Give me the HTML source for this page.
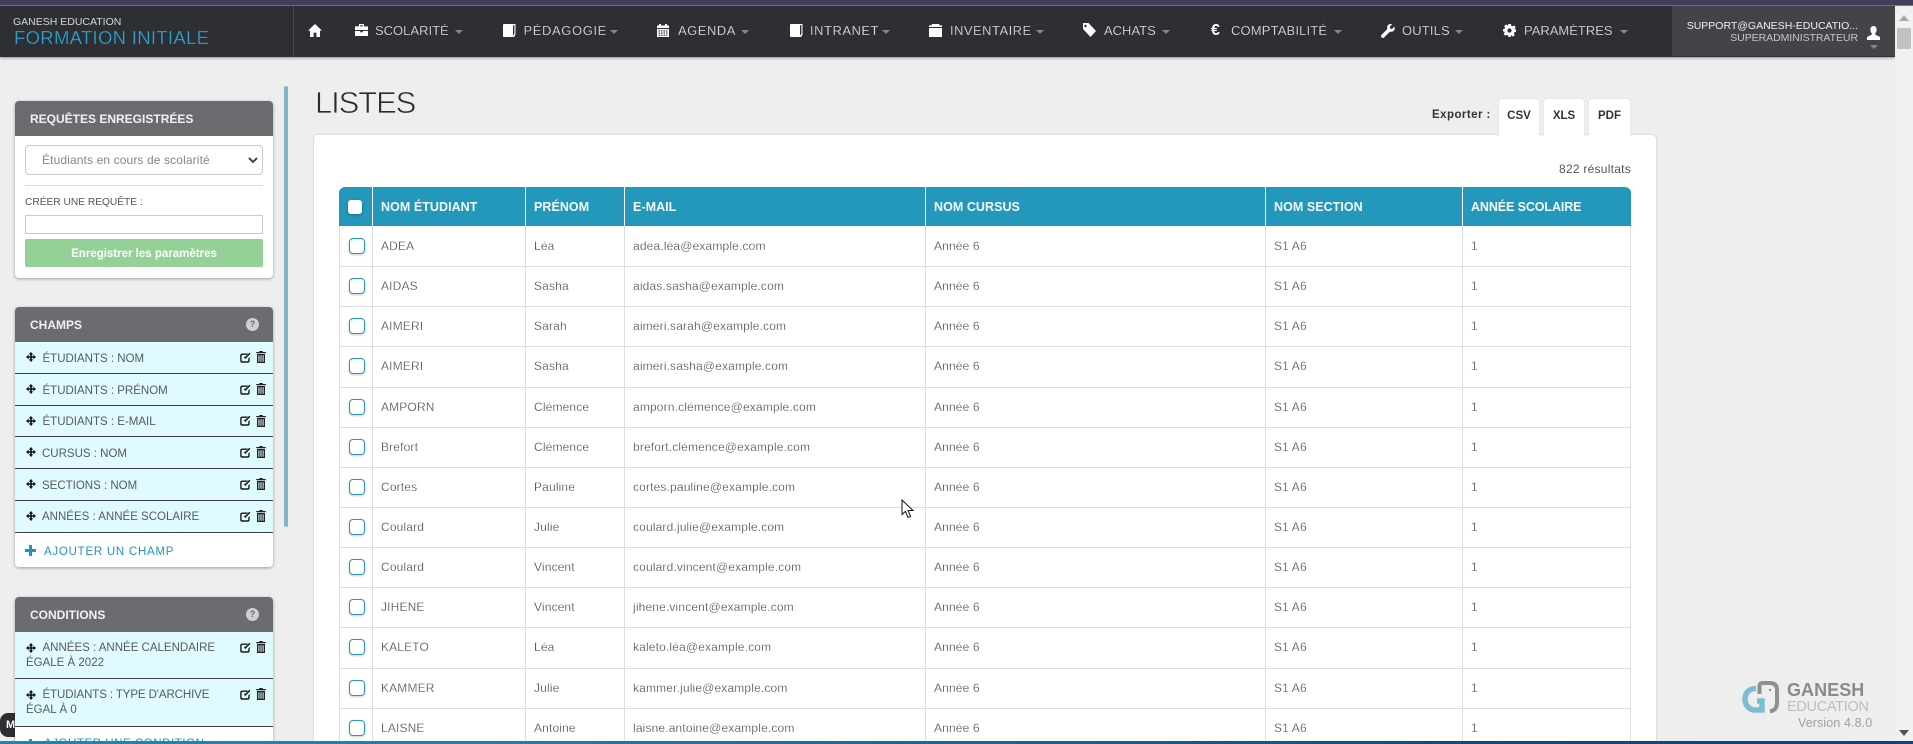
<!DOCTYPE html>
<html lang="fr"><head><meta charset="utf-8"><title>Listes</title>
<style>
*{box-sizing:border-box}
html,body{margin:0;padding:0;width:1913px;height:744px;overflow:hidden;background:#eee;font-family:"Liberation Sans",sans-serif}
body{position:relative}
.t{position:absolute;white-space:nowrap;line-height:16px;height:16px}
.a{position:absolute}
#top{left:0;top:0;width:1913px;height:6px;background:#433f5a;border-bottom:1px solid #77748a}
#nav{left:0;top:6px;width:1895px;height:51px;background:#2e2f34;box-shadow:0 1px 3px rgba(0,0,0,.4)}
#div{left:293px;top:6px;width:1px;height:51px;background:#47484d}
#user{left:1672px;top:6px;width:223px;height:50px;background:#434447}
.n{font-size:13px;color:#e4e5e6;top:22.5px;-webkit-text-stroke:.2px #2e2f34}
.c{position:absolute;top:30px;width:0;height:0;border-left:4px solid transparent;border-right:4px solid transparent;border-top:4px solid #85868a}
.ic{position:absolute;fill:#fff}
#sb{left:1895px;top:6px;width:18px;height:735px;background:#f1f1f1}
#thumb{left:1897px;top:28px;width:14px;height:21px;background:#c1c1c1}
#bot{left:0;top:741px;width:1913px;height:3px;background:linear-gradient(90deg,#1f86ad 0,#1f80a8 25%,#0f4c86 75%,#0d427c 100%)}
.p{position:absolute;left:15px;width:258px;background:#fff;border-radius:4px;box-shadow:0 1px 3px rgba(0,0,0,.35)}
.h{position:absolute;left:15px;width:258px;height:35px;background:#6b6c70;border-radius:4px 4px 0 0}
.ht{font-size:12px;font-weight:bold;color:#f1f1f1}
.r{position:absolute;left:15px;width:258px;background:#e0fbff;border-bottom:1.5px solid #3f4045}
.s{font-size:11.5px;color:#58595c}
.hp{position:absolute;left:246px;width:13px;height:13px;border-radius:50%;background:#d0d0d0;color:#6b6c70;font:bold 9px/13px "Liberation Sans",sans-serif;text-align:center}
#bar{left:284px;top:86px;width:4px;height:441px;background:#81b6c9;border-radius:2px}
#card{left:314px;top:135px;width:1342px;height:620px;background:#fff;border-radius:4px;box-shadow:0 0 2px rgba(0,0,0,.18)}
.tab{position:absolute;top:98px;height:38px;background:#fff;border:1px solid #e6e6e6;border-bottom:0;border-radius:4px 4px 0 0;font:bold 11.5px/35px "Liberation Sans",sans-serif;color:#333;text-align:center}
table{position:absolute;left:339px;top:187px;width:1292px;border-collapse:separate;border-spacing:0;table-layout:fixed;font-size:12px;letter-spacing:.15px;color:#4c4c4c}
th{height:39px;background:#2398bb;color:#f4fafc;font-size:12.5px;letter-spacing:.05px;text-align:left;padding:0 0 0 8px;border-left:1px solid #fff;font-weight:bold}
th:first-child{border-left:0;border-radius:6px 0 0 0;padding:0}
th:last-child{border-radius:0 6px 0 0;letter-spacing:-.1px}
td{height:40.15px;padding:0 0 1px 8px;border-left:1px solid #ddd;border-bottom:1px solid #ddd;-webkit-text-stroke:.2px #fff}
tbody tr:first-child td{height:41.15px}
td:first-child{padding:0 0 1px 0}
td:last-child{border-right:1px solid #ddd}
.cb{display:block;width:16px;height:16px;margin:0 0 0 9px;border:1.5px solid #2398bb;border-radius:4px;background:#fff;box-shadow:0 1px 2px rgba(0,0,0,.2)}
.cbh{display:block;width:14px;height:14px;margin:0 0 0 9px;background:#fff;border-radius:3px;box-shadow:0 1px 3px rgba(0,0,0,.3)}
</style></head><body>
<svg width="0" height="0" style="position:absolute">
<symbol id="mv" viewBox="0 0 10 10"><path d="M5 0 7.2 2.6H5.8V4.2H7.4V2.8L10 5 7.4 7.2V5.8H5.8V7.4H7.2L5 10 2.8 7.4H4.2V5.8H2.6V7.2L0 5 2.6 2.8V4.2H4.2V2.6H2.8Z" fill="#111"/></symbol>
<symbol id="ed" viewBox="0 0 11 11"><path d="M2.5 1.5H8L6.8 2.9H2.6Q1.6 2.9 1.6 3.9V8.3Q1.6 9.3 2.6 9.3H7.3Q8.3 9.3 8.3 8.3V6.4L9.7 5V8.6Q9.7 10.7 7.6 10.7H2.3Q.2 10.7.2 8.6V3.6Q.2 1.5 2.5 1.5Z" fill="#1a1a1a"/><path d="M4 5.6 5.3 7 10.5 1.8 9.3.7 5.3 4.7 4.8 4.4Z" fill="#1a1a1a"/></symbol>
<symbol id="tr" viewBox="0 0 10 12"><path d="M3.5 0H6.5L7 1H9.8V2.3H.2V1H3ZM1 3H9V12H1ZM2.4 4.2V10.8H3.4V4.2ZM4.5 4.2V10.8H5.5V4.2ZM6.6 4.2V10.8H7.6V4.2Z" fill="#222" fill-rule="evenodd"/></symbol>
</svg>
<div class="a" id="top"></div>
<div class="a" id="nav"></div>
<div class="a" id="user"></div>
<div class="a" id="div"></div>
<span class="t" style="left:13px;top:14px;font-size:10.5px;color:#d6d6d6">GANESH EDUCATION</span>
<span class="t" style="left:14px;top:27.5px;height:20px;line-height:20px;font-size:18.5px;letter-spacing:.3px;color:#2aa6ce;-webkit-text-stroke:.25px #2e2f34">FORMATION INITIALE</span>

<svg class="ic" style="left:308px;top:24px" width="14" height="13" viewBox="0 0 14 13"><path d="M7 0 14 6.6H12V13H8.4V8.6H5.6V13H2V6.6H0Z"/></svg>
<svg class="ic" style="left:355px;top:24px" width="13" height="12" viewBox="0 0 13 12"><path d="M4 0H9V2.4H13V6H0V2.4H4ZM5.2 1.2V2.4H7.8V1.2ZM0 7H5.2V8.2H7.8V7H13V12H0Z"/></svg>
<span class="t n" style="left:375px">SCOLARITÉ</span><i class="c" style="left:455px"></i>
<svg class="ic" style="left:503px;top:24px" width="13" height="13" viewBox="0 0 13 13"><path d="M1 0H12.5V10.5L11 13H1Q0 13 0 12V1Q0 0 1 0ZM10 1.2V11.6L11.4 9.8V1.2Z" fill-rule="evenodd"/></svg>
<span class="t n" style="left:523.5px;letter-spacing:.6px">PÉDAGOGIE</span><i class="c" style="left:610px"></i>
<svg class="ic" style="left:657px;top:24px" width="12" height="13" viewBox="0 0 12 13"><path d="M2 0H4V1.5H8V0H10V1.5H12V4H0V1.5H2ZM0 5H12V13H0ZM1.5 6.3V7.5H3V6.3ZM4 6.3V7.5H5.5V6.3ZM6.5 6.3V7.5H8V6.3ZM9 6.3V7.5H10.5V6.3ZM1.5 8.5V9.6H3V8.5ZM4 8.5V9.6H5.5V8.5ZM6.5 8.5V9.6H8V8.5ZM9 8.5V9.6H10.5V8.5ZM1.5 10.6V11.7H3V10.6ZM4 10.6V11.7H5.5V10.6ZM6.5 10.6V11.7H8V10.6ZM9 10.6V11.7H10.5V10.6Z" fill-rule="evenodd"/></svg>
<span class="t n" style="left:678px;letter-spacing:.5px">AGENDA</span><i class="c" style="left:741px"></i>
<svg class="ic" style="left:790px;top:24px" width="13" height="13" viewBox="0 0 13 13"><path d="M1 0H12.5V10.5L11 13H1Q0 13 0 12V1Q0 0 1 0ZM10 1.2V11.6L11.4 9.8V1.2Z" fill-rule="evenodd"/></svg>
<span class="t n" style="left:810px;letter-spacing:.5px">INTRANET</span><i class="c" style="left:882px"></i>
<svg class="ic" style="left:929px;top:24px" width="13" height="13" viewBox="0 0 13 13"><path d="M3 0H10L10.6 1.4H13V3H0V1.4H2.4ZM0 4H13V13H0Z"/></svg>
<span class="t n" style="left:950px;letter-spacing:.46px">INVENTAIRE</span><i class="c" style="left:1036px"></i>
<svg class="ic" style="left:1083px;top:23px" width="13" height="14" viewBox="0 0 13 14"><path d="M0 0H5.5L13 8 7.5 14 0 6ZM2.5 1.8A1.2 1.2 0 1 0 2.51 1.8Z" fill-rule="evenodd"/></svg>
<span class="t n" style="left:1104px">ACHATS</span><i class="c" style="left:1162px"></i>
<span class="t" style="left:1211px;top:22.5px;font-size:16px;font-weight:bold;color:#fff">€</span>
<span class="t n" style="left:1231px;letter-spacing:.15px">COMPTABILITÉ</span><i class="c" style="left:1334px"></i>
<svg class="ic" style="left:1381px;top:24px" width="14" height="14" viewBox="0 0 14 14"><path d="M13.6 2.6 11 5 9.2 4.6 8.8 2.8 11.2.3C9.5-.4 7.5.2 6.6 1.6 5.9 2.8 6 4 6.4 5L.6 10.8C-.2 11.6-.2 12.6.5 13.4 1.3 14.2 2.4 14.2 3.2 13.4L9 7.6C10.2 8 11.6 7.8 12.6 6.9 13.7 5.8 14 4 13.6 2.6Z"/></svg>
<span class="t n" style="left:1402px;letter-spacing:.15px">OUTILS</span><i class="c" style="left:1455px"></i>
<svg class="ic" style="left:1503px;top:24px" width="13" height="13" viewBox="0 0 13 13"><path d="M5.2 0H7.8L8.2 1.8 9.6 2.4 11.2 1.4 12.8 3.6 11.4 4.8 11.6 5.2 13 5.4V7.8L11.4 8.2 10.9 9.4 11.8 11 9.8 12.6 8.4 11.4 7.8 11.6 7.6 13H5.4L5 11.4 3.8 10.9 2.2 11.8.6 9.8 1.8 8.4 1.4 7.6 0 7.4V5.2L1.6 4.8 2.1 3.6 1.2 2 3.2.4 4.6 1.6 5 1.4ZM6.5 4.4A2.1 2.1 0 1 0 6.51 4.4Z" fill-rule="evenodd"/></svg>
<span class="t n" style="left:1524px">PARAMÈTRES</span><i class="c" style="left:1620px"></i>

<span class="t" style="right:55px;top:18px;font-size:10.5px;color:#f0f0f0">SUPPORT@GANESH-EDUCATIO...</span>
<span class="t" style="right:55px;top:30px;font-size:10.5px;color:#c6c7c9;letter-spacing:-.05px">SUPERADMINISTRATEUR</span>
<svg class="ic" style="left:1867px;top:26px" width="13" height="14" viewBox="0 0 13 14"><path d="M6.5 0C8.5 0 9.6 1.5 9.6 3.6 9.6 5.2 9 6.5 8.2 7.4V8.6L13 11V14H0V11L4.8 8.6V7.4C4 6.5 3.4 5.2 3.4 3.6 3.4 1.5 4.5 0 6.5 0Z"/></svg>
<i class="c" style="left:1870px;top:45px"></i>

<div class="a" id="bar"></div>

<!-- Panel 1 -->
<div class="p" style="top:101px;height:177px"></div>
<div class="h" style="top:101px"></div>
<span class="t ht" style="left:30px;top:111px">REQUÊTES ENREGISTRÉES</span>
<div class="a" style="left:25px;top:145px;width:238px;height:30px;border:1px solid #ccc;border-radius:4px;background:#fff"></div>
<span class="t" style="left:42px;top:152px;font-size:12px;color:#858585;letter-spacing:.12px">Étudiants en cours de scolarité</span>
<svg class="a" style="left:248px;top:157px" width="10" height="7" viewBox="0 0 10 7"><path d="M1 1 5 5 9 1" fill="none" stroke="#444" stroke-width="2"/></svg>
<div class="a" style="left:25px;top:185px;width:238px;height:1px;background:#ddd"></div>
<span class="t" style="left:25px;top:195px;font-size:10.2px;color:#555">CRÉER UNE REQUÊTE :</span>
<div class="a" style="left:25px;top:215px;width:238px;height:19px;border:1px solid #ccc;background:#fff"></div>
<div class="a" style="left:25px;top:239px;width:238px;height:28px;background:#94d197;border-radius:2px;color:#fff;font:bold 11.5px/30px 'Liberation Sans',sans-serif;text-align:center">Enregistrer les paramètres</div>

<!-- Panel 2 -->
<div class="p" style="top:307px;height:260px"></div>
<div class="h" style="top:307px"></div>
<span class="t ht" style="left:30px;top:317px">CHAMPS</span>
<span class="hp" style="top:318px">?</span>
<div class="r" style="top:342px;height:32px"></div>
<div class="r" style="top:374px;height:32px"></div>
<div class="r" style="top:406px;height:31px"></div>
<div class="r" style="top:437px;height:32px"></div>
<div class="r" style="top:469px;height:32px"></div>
<div class="r" style="top:501px;height:32px"></div>

<span class="t s" style="left:42.5px;top:350.5px">ÉTUDIANTS : NOM</span>
<span class="t s" style="left:42.5px;top:382.5px">ÉTUDIANTS : PRÉNOM</span>
<span class="t s" style="left:42.5px;top:414px">ÉTUDIANTS : E-MAIL</span>
<span class="t s" style="left:42px;top:445.5px">CURSUS : NOM</span>
<span class="t s" style="left:42px;top:477.5px">SECTIONS : NOM</span>
<span class="t s" style="left:42px;top:508.5px">ANNÉES : ANNÉE SCOLAIRE</span>

<svg class="a" style="left:25.5px;top:352px" width="10" height="10"><use href="#mv"/></svg>
<svg class="a" style="left:25.5px;top:384px" width="10" height="10"><use href="#mv"/></svg>
<svg class="a" style="left:25.5px;top:416px" width="10" height="10"><use href="#mv"/></svg>
<svg class="a" style="left:25.5px;top:447px" width="10" height="10"><use href="#mv"/></svg>
<svg class="a" style="left:25.5px;top:479px" width="10" height="10"><use href="#mv"/></svg>
<svg class="a" style="left:25.5px;top:511px" width="10" height="10"><use href="#mv"/></svg>

<svg class="a" style="left:240px;top:352px" width="11" height="11"><use href="#ed"/></svg><svg class="a" style="left:256px;top:351px" width="10" height="12"><use href="#tr"/></svg>
<svg class="a" style="left:240px;top:384px" width="11" height="11"><use href="#ed"/></svg><svg class="a" style="left:256px;top:383px" width="10" height="12"><use href="#tr"/></svg>
<svg class="a" style="left:240px;top:415px" width="11" height="11"><use href="#ed"/></svg><svg class="a" style="left:256px;top:415px" width="10" height="12"><use href="#tr"/></svg>
<svg class="a" style="left:240px;top:447px" width="11" height="11"><use href="#ed"/></svg><svg class="a" style="left:256px;top:446px" width="10" height="12"><use href="#tr"/></svg>
<svg class="a" style="left:240px;top:479px" width="11" height="11"><use href="#ed"/></svg><svg class="a" style="left:256px;top:478px" width="10" height="12"><use href="#tr"/></svg>
<svg class="a" style="left:240px;top:511px" width="11" height="11"><use href="#ed"/></svg><svg class="a" style="left:256px;top:510px" width="10" height="12"><use href="#tr"/></svg>

<svg class="a" style="left:25px;top:545px" width="11" height="11" viewBox="0 0 11 11"><path d="M4 0H7V4H11V7H7V11H4V7H0V4H4Z" fill="#2196b9"/></svg>
<span class="t" style="left:44px;top:544px;font-size:11.5px;letter-spacing:.75px;color:#2196b9">AJOUTER UN CHAMP</span>

<!-- M button -->
<div class="a" style="left:0;top:713px;width:20px;height:24px;background:#2d2e33;border-radius:8px 0 0 8px;color:#fff;font:bold 11px/24px 'Liberation Sans',sans-serif;padding-left:6px">M</div>

<!-- Panel 3 -->
<div class="p" style="top:597px;height:160px"></div>
<div class="h" style="top:597px"></div>
<span class="t ht" style="left:30px;top:607px">CONDITIONS</span>
<span class="hp" style="top:608px">?</span>
<div class="r" style="top:632px;height:47px"></div>
<div class="r" style="top:679px;height:48px"></div>
<svg class="a" style="left:25.5px;top:642.5px" width="10" height="10"><use href="#mv"/></svg>
<span class="t s" style="left:42.5px;top:640px">ANNÉES : ANNÉE CALENDAIRE</span>
<span class="t s" style="left:26px;top:655px">ÉGALE À 2022</span>
<svg class="a" style="left:240px;top:642px" width="11" height="11"><use href="#ed"/></svg><svg class="a" style="left:256px;top:641px" width="10" height="12"><use href="#tr"/></svg>
<svg class="a" style="left:25.5px;top:689.5px" width="10" height="10"><use href="#mv"/></svg>
<span class="t s" style="left:42.5px;top:687px;letter-spacing:-.1px">ÉTUDIANTS : TYPE D'ARCHIVE</span>
<span class="t s" style="left:26px;top:702px">ÉGAL À 0</span>
<svg class="a" style="left:240px;top:689px" width="11" height="11"><use href="#ed"/></svg><svg class="a" style="left:256px;top:688px" width="10" height="12"><use href="#tr"/></svg>
<span class="t" style="left:44px;top:736px;font-size:11.5px;letter-spacing:.55px;color:#2196b9">AJOUTER UNE CONDITION</span>
<svg class="a" style="left:25px;top:739px" width="11" height="11" viewBox="0 0 11 11"><path d="M4 0H7V4H11V7H7V11H4V7H0V4H4Z" fill="#2196b9"/></svg>

<!-- Main -->
<span class="t" style="left:315px;top:85px;height:36px;line-height:36px;font-size:31px;letter-spacing:-1.1px;color:#2c2c2c;font-weight:normal;-webkit-text-stroke:.7px #eee">LISTES</span>
<span class="t" style="left:1432px;top:107px;font-size:11.5px;font-weight:bold;color:#333;letter-spacing:.45px">Exporter :</span>
<div class="a" id="card"></div>
<div class="tab" style="left:1498px;width:42px">CSV</div>
<div class="tab" style="left:1543px;width:42px">XLS</div>
<div class="tab" style="left:1588px;width:43px">PDF</div>
<span class="t" style="right:282px;top:161px;font-size:12px;color:#555;letter-spacing:.25px">822 résultats</span>

<table>
<colgroup><col style="width:33px"><col style="width:153px"><col style="width:99px"><col style="width:301px"><col style="width:340px"><col style="width:197px"><col style="width:169px"></colgroup>
<thead><tr><th><span class="cbh"></span></th><th>NOM ÉTUDIANT</th><th>PRÉNOM</th><th>E-MAIL</th><th>NOM CURSUS</th><th>NOM SECTION</th><th>ANNÉE SCOLAIRE</th></tr></thead>
<tbody>
<tr><td><span class="cb"></span></td><td>ADEA</td><td>Léa</td><td>adea.léa@example.com</td><td>Année 6</td><td>S1 A6</td><td>1</td></tr>
<tr><td><span class="cb"></span></td><td>AIDAS</td><td>Sasha</td><td>aidas.sasha@example.com</td><td>Année 6</td><td>S1 A6</td><td>1</td></tr>
<tr><td><span class="cb"></span></td><td>AIMERI</td><td>Sarah</td><td>aimeri.sarah@example.com</td><td>Année 6</td><td>S1 A6</td><td>1</td></tr>
<tr><td><span class="cb"></span></td><td>AIMERI</td><td>Sasha</td><td>aimeri.sasha@example.com</td><td>Année 6</td><td>S1 A6</td><td>1</td></tr>
<tr><td><span class="cb"></span></td><td>AMPORN</td><td>Clémence</td><td>amporn.clémence@example.com</td><td>Année 6</td><td>S1 A6</td><td>1</td></tr>
<tr><td><span class="cb"></span></td><td>Brefort</td><td>Clémence</td><td>brefort.clémence@example.com</td><td>Année 6</td><td>S1 A6</td><td>1</td></tr>
<tr><td><span class="cb"></span></td><td>Cortes</td><td>Pauline</td><td>cortes.pauline@example.com</td><td>Année 6</td><td>S1 A6</td><td>1</td></tr>
<tr><td><span class="cb"></span></td><td>Coulard</td><td>Julie</td><td>coulard.julie@example.com</td><td>Année 6</td><td>S1 A6</td><td>1</td></tr>
<tr><td><span class="cb"></span></td><td>Coulard</td><td>Vincent</td><td>coulard.vincent@example.com</td><td>Année 6</td><td>S1 A6</td><td>1</td></tr>
<tr><td><span class="cb"></span></td><td>JIHENE</td><td>Vincent</td><td>jihene.vincent@example.com</td><td>Année 6</td><td>S1 A6</td><td>1</td></tr>
<tr><td><span class="cb"></span></td><td>KALETO</td><td>Léa</td><td>kaleto.léa@example.com</td><td>Année 6</td><td>S1 A6</td><td>1</td></tr>
<tr><td><span class="cb"></span></td><td>KAMMER</td><td>Julie</td><td>kammer.julie@example.com</td><td>Année 6</td><td>S1 A6</td><td>1</td></tr>
<tr><td><span class="cb"></span></td><td>LAISNE</td><td>Antoine</td><td>laisne.antoine@example.com</td><td>Année 6</td><td>S1 A6</td><td>1</td></tr>
</tbody></table>

<!-- Cursor -->
<svg class="a" style="left:901px;top:499px" width="14" height="20" viewBox="0 0 14 20"><path d="M1 1V15.5L4.4 12.4 7 18.5 9.6 17.4 7 11.5H12Z" fill="#fff" stroke="#111" stroke-width="1"/></svg>

<!-- Logo -->
<svg class="a" style="left:1742px;top:680px" width="38" height="34" viewBox="0 0 38 34"><path d="M14 8.5C6 8.5 3 14 3 19 3 26 8 30 13 30H20V21H15" fill="none" stroke="#7dbdd4" stroke-width="5.5"/><path d="M17.5 14V6Q17.5 3 21 3H28Q35 3 35 10V23Q35 30 28 31.5" fill="none" stroke="#8f8f8f" stroke-width="4"/><circle cx="28" cy="10" r="1.2" fill="#8f8f8f"/></svg>
<span class="t" style="left:1787px;top:681px;height:18px;line-height:18px;font-size:18px;font-weight:bold;color:#8a8a8a;letter-spacing:.05px">GANESH</span>
<span class="t" style="left:1787px;top:698px;height:18px;line-height:18px;font-size:14.5px;color:#bdbdbd;letter-spacing:-.3px">EDUCATION</span>
<span class="t" style="left:1798px;top:715px;font-size:12.5px;color:#a0a0a0;letter-spacing:.1px">Version 4.8.0</span>

<!-- Scrollbar -->
<div class="a" id="sb"></div>
<div class="a" id="thumb"></div>
<svg class="a" style="left:1899px;top:15px" width="10" height="6"><path d="M5 0 10 6H0Z" fill="#a8a8a8"/></svg>
<svg class="a" style="left:1899px;top:730px" width="10" height="6"><path d="M0 0H10L5 6Z" fill="#505050"/></svg>
<div class="a" id="bot"></div>
</body></html>
